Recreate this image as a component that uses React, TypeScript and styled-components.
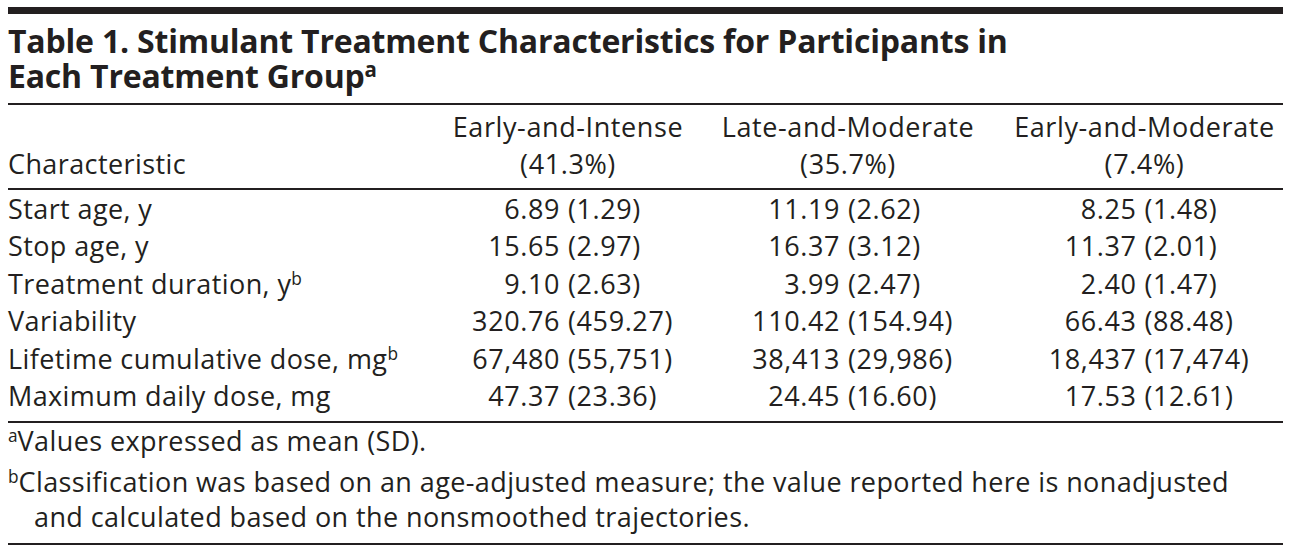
import React from "react";
import styled, { createGlobalStyle } from "styled-components";

const GlobalStyle = createGlobalStyle`
  html, body {
    margin: 0;
    padding: 0;
    background: #fff;
  }
  body {
    font-family: "Open Sans", "Noto Sans", sans-serif;
    color: #231f20;
  }
`;

const Page = styled.div`
  width: 1275px;
  padding: 7px 8px 0 8px;
`;

const Rule = styled.div<{ $thick?: boolean }>`
  height: ${(p) => (p.$thick ? "7px" : "2px")};
  background: #231f20;
`;

const Title = styled.h1`
  margin: 0;
  padding: 9px 0 10px 0;
  font-size: 32px;
  line-height: 35px;
  font-weight: 700;
  letter-spacing: -0.2px;
`;

const Sup = styled.sup`
  font-size: 0.64em;
  line-height: 0;
  vertical-align: 0.55em;
  font-weight: inherit;
  letter-spacing: 0;
`;

const Grid = styled.div`
  display: grid;
  grid-template-columns: 414px 292px 268px 1fr;
  font-size: 27px;
  line-height: 37.4px;
  letter-spacing: 0.4px;
`;

const HeadGrid = styled(Grid)`
  align-items: end;
  padding: 3px 0 6px 0;
  line-height: 37px;
`;

const BodyGrid = styled(Grid)`
  padding: 0 0 7px 0;
`;

const Label = styled.div`
  white-space: nowrap;
`;

const HeadCell = styled.div<{ $shift?: number }>`
  text-align: center;
  white-space: nowrap;
  letter-spacing: 0.6px;
  padding-left: ${(p) => p.$shift ?? 0}px;
`;

const ValueCell = styled.div<{ $shift?: number }>`
  display: grid;
  grid-template-columns: 1fr 1fr;
  letter-spacing: 0.6px;
  padding-left: ${(p) => p.$shift ?? 0}px;
`;

const Mean = styled.span`
  text-align: right;
  padding-right: 8px;
  white-space: nowrap;
`;

const Sd = styled.span`
  text-align: left;
  white-space: nowrap;
`;

const Notes = styled.div`
  font-size: 27px;
  line-height: 35px;
  letter-spacing: 0.4px;
  padding: 0 0 9px 0;
`;

const Note = styled.p`
  margin: 0;
  padding-left: 26px;
  text-indent: -26px;
  & + & {
    margin-top: 6px;
  }
`;

type Row = { label: React.ReactNode; values: [string, string][] };

const groups = [
  { name: "Early-and-Intense", pct: "(41.3%)", shift: 0 },
  { name: "Late-and-Moderate", pct: "(35.7%)", shift: 0 },
  { name: "Early-and-Moderate", pct: "(7.4%)", shift: 24 },
];

const rows: Row[] = [
  { label: "Start age, y", values: [["6.89", "(1.29)"], ["11.19", "(2.62)"], ["8.25", "(1.48)"]] },
  { label: "Stop age, y", values: [["15.65", "(2.97)"], ["16.37", "(3.12)"], ["11.37", "(2.01)"]] },
  {
    label: <>Treatment duration, y<Sup>b</Sup></>,
    values: [["9.10", "(2.63)"], ["3.99", "(2.47)"], ["2.40", "(1.47)"]],
  },
  { label: "Variability", values: [["320.76", "(459.27)"], ["110.42", "(154.94)"], ["66.43", "(88.48)"]] },
  {
    label: <>Lifetime cumulative dose, mg<Sup>b</Sup></>,
    values: [["67,480", "(55,751)"], ["38,413", "(29,986)"], ["18,437", "(17,474)"]],
  },
  { label: "Maximum daily dose, mg", values: [["47.37", "(23.36)"], ["24.45", "(16.60)"], ["17.53", "(12.61)"]] },
];

export default function App() {
  return (
    <Page>
      <GlobalStyle />
      <Rule $thick />
      <Title>
        Table 1. Stimulant Treatment Characteristics for Participants in
        <br />
        Each Treatment Group<Sup>a</Sup>
      </Title>
      <Rule />
      <HeadGrid>
        <Label>Characteristic</Label>
        {groups.map((g) => (
          <HeadCell key={g.name} $shift={g.shift}>
            {g.name}
            <br />
            {g.pct}
          </HeadCell>
        ))}
      </HeadGrid>
      <Rule />
      <BodyGrid>
        {rows.map((r, i) => (
          <React.Fragment key={i}>
            <Label>{r.label}</Label>
            {r.values.map(([m, s], j) => (
              <ValueCell key={j} $shift={groups[j].shift}>
                <Mean>{m}</Mean>
                <Sd>{s}</Sd>
              </ValueCell>
            ))}
          </React.Fragment>
        ))}
      </BodyGrid>
      <Rule />
      <Notes>
        <Note>
          <Sup>a</Sup>Values expressed as mean (SD).
        </Note>
        <Note>
          <Sup>b</Sup>Classification was based on an age-adjusted measure; the value reported here is nonadjusted
          <br />
          and calculated based on the nonsmoothed trajectories.
        </Note>
      </Notes>
      <Rule />
    </Page>
  );
}
